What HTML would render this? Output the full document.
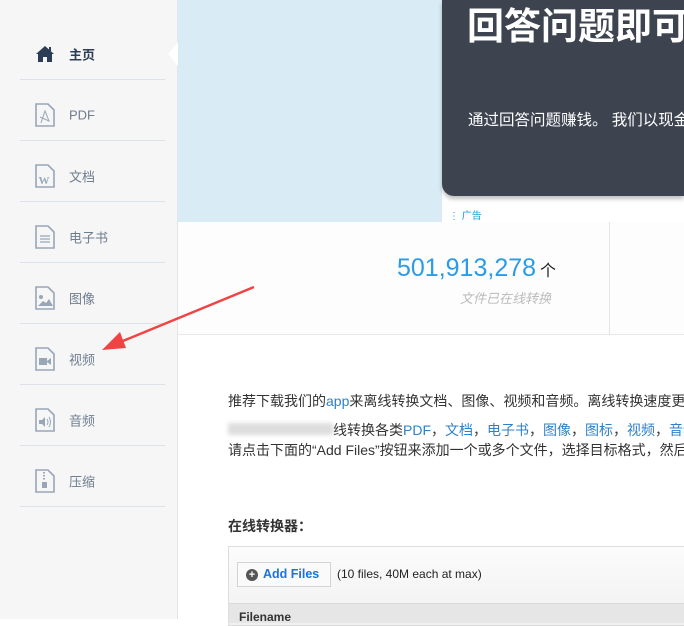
<!DOCTYPE html>
<html><head><meta charset="utf-8"><style>
*{margin:0;padding:0;box-sizing:border-box}
body{width:684px;height:619px;overflow:hidden;position:relative;background:#fff;font-family:"Liberation Sans","Noto Sans CJK SC",sans-serif}
.side{position:absolute;left:0;top:0;width:178px;height:619px;background:#f6f6f6;border-right:1px solid #e2e6ea}
.item{position:absolute;left:20px;width:145px;height:61px;border-bottom:1px solid #dde2e8;color:#6f7d90;font-size:13px}
.item span{position:absolute;left:49px;top:35px;transform:translateY(-50%)}
.item svg{position:absolute;left:15px;top:35px;transform:translateY(-50%)}
.abs{position:absolute}
a{color:#2f80c8;text-decoration:none}
</style></head><body>
<div class="side">
 <div class="item" style="top:19px"><svg width="20" height="18" viewBox="0 0 20 18"><path d="M10 1 L1 9 L3 9 L3 17 L8 17 L8 12 L12 12 L12 17 L17 17 L17 9 L19 9 Z" fill="#2c3e55"/><rect x="14" y="2" width="2" height="4" fill="#2c3e55"/></svg><span style="color:#2c3e55;font-weight:bold">主页</span></div>
 <div class="item" style="top:80px"><svg width="20" height="24" viewBox="0 0 20 24"><path d="M1 1H13L19 7V23H1Z" fill="none" stroke="#98a6b8" stroke-width="1.6"/><path d="M6 20L10 8L14 18L5 14" fill="none" stroke="#98a6b8" stroke-width="1"/></svg><span>PDF</span></div>
 <div class="item" style="top:141px"><svg width="20" height="24" viewBox="0 0 20 24"><path d="M1 1H13L19 7V23H1Z" fill="none" stroke="#98a6b8" stroke-width="1.6"/><text x="3.5" y="20" font-size="11" font-family="Liberation Serif" font-weight="bold" fill="#98a6b8">W</text></svg><span>文档</span></div>
 <div class="item" style="top:202px"><svg width="20" height="24" viewBox="0 0 20 24"><path d="M1 1H13L19 7V23H1Z" fill="none" stroke="#98a6b8" stroke-width="1.6"/><path d="M5 11H15M5 14H15M5 17H15" stroke="#98a6b8" stroke-width="1.3"/></svg><span>电子书</span></div>
 <div class="item" style="top:263px"><svg width="20" height="24" viewBox="0 0 20 24"><path d="M1 1H13L19 7V23H1Z" fill="none" stroke="#98a6b8" stroke-width="1.6"/><circle cx="6" cy="11" r="2" fill="#98a6b8"/><path d="M3 20L8 15L11 17L14 13L18 20Z" fill="#98a6b8"/></svg><span>图像</span></div>
 <div class="item" style="top:324px"><svg width="20" height="24" viewBox="0 0 20 24"><path d="M1 1H13L19 7V23H1Z" fill="none" stroke="#98a6b8" stroke-width="1.6"/><rect x="4" y="11" width="8" height="7" fill="#98a6b8"/><path d="M12 14L16 11V18L12 15Z" fill="#98a6b8"/></svg><span>视频</span></div>
 <div class="item" style="top:385px"><svg width="20" height="24" viewBox="0 0 20 24"><path d="M1 1H13L19 7V23H1Z" fill="none" stroke="#98a6b8" stroke-width="1.6"/><path d="M4 12H7L10 9V19L7 16H4Z" fill="#98a6b8"/><path d="M12 11Q14 14 12 17M14 9Q17 14 14 19" fill="none" stroke="#98a6b8"/></svg><span>音频</span></div>
 <div class="item" style="top:446px"><svg width="20" height="24" viewBox="0 0 20 24"><path d="M1 1H13L19 7V23H1Z" fill="none" stroke="#98a6b8" stroke-width="1.6"/><path d="M9 3V12" stroke="#98a6b8" stroke-width="2" stroke-dasharray="1.5 1.5"/><rect x="7" y="13" width="5" height="6" fill="#98a6b8"/></svg><span>压缩</span></div>
</div>
<div class="abs" style="left:168px;top:42px;width:0;height:0;border-top:12px solid transparent;border-bottom:12px solid transparent;border-right:10px solid #fff"></div>
<div class="abs" style="left:178px;top:0;width:264px;height:222px;background:#d9ecf6"></div>
<div class="abs" style="left:442px;top:0;width:242px;height:196px;background:#3d4450;border-bottom-left-radius:12px;box-shadow:0 3px 4px rgba(0,0,0,.25)"></div>
<div class="abs" style="left:467px;top:-4px;color:#fff;font-size:37px;font-weight:bold;white-space:nowrap">回答问题即可</div>
<div class="abs" style="left:468px;top:108px;color:#fff;font-size:15.5px;white-space:nowrap">通过回答问题赚钱。 我们以现金</div>
<div class="abs" style="left:449px;top:207px;color:#1aa3d9;font-size:10px">⋮ 广告</div>
<div class="abs" style="left:178px;top:222px;width:506px;height:113px;border-bottom:1px solid #e8e8e8;background:#fdfdfd"></div>
<div class="abs" style="left:609px;top:222px;width:1px;height:113px;background:#e4e4e4"></div>
<div class="abs" style="left:397px;top:254px;color:#2b9be8;font-size:25px;white-space:nowrap">501,913,278<span style="color:#222;font-size:16px;margin-left:4px">个</span></div>
<div class="abs" style="left:460px;top:288px;color:#bbb;font-size:13px;font-style:italic">文件已在线转换</div>
<div class="abs" style="left:228px;top:391px;color:#333;font-size:14px;white-space:nowrap;line-height:20px">推荐下载我们的<a>app</a>来离线转换文档、图像、视频和音频。离线转换速度更</div>
<div class="abs" style="left:228px;top:420px;color:#333;font-size:14px;white-space:nowrap;line-height:20px"><span style="display:inline-block;width:105px;height:12px;background:#ddd;filter:blur(2px)"></span>线转换各类<a>PDF</a>，<a>文档</a>，<a>电子书</a>，<a>图像</a>，<a>图标</a>，<a>视频</a>，<a>音频</a></div>
<div class="abs" style="left:228px;top:440px;color:#333;font-size:14px;white-space:nowrap;line-height:20px">请点击下面的“Add Files”按钮来添加一个或多个文件，选择目标格式，然后</div>
<div class="abs" style="left:228px;top:516px;color:#333;font-size:14px;font-weight:bold">在线转换器：</div>
<div class="abs" style="left:228px;top:546px;width:470px;height:80px;border:1px solid #ddd;background:linear-gradient(#fcfcfc,#f0f0f0)"></div>
<div class="abs" style="left:237px;top:562px;width:94px;height:25px;border:1px solid #d4d4d4;background:#fafafa;font-size:12.5px;font-weight:bold;color:#1a73d9;line-height:23px;padding-left:25px">Add Files</div>
<div class="abs" style="left:246px;top:569px;width:12px;height:12px;border-radius:50%;background:#555;color:#fff;font-size:11px;line-height:12px;text-align:center;font-weight:bold">+</div>
<div class="abs" style="left:337px;top:567px;font-size:12px;color:#222">(10 files, 40M each at max)</div>
<div class="abs" style="left:229px;top:603px;width:460px;height:20px;background:#e6e6e6;border-top:1px solid #d8d8d8;font-size:12px;font-weight:bold;color:#333;padding:6px 0 0 10px">Filename</div>
<svg class="abs" style="left:0;top:0" width="684" height="619"><path d="M254 287L118 343" stroke="#f04444" stroke-width="2.5"/><path d="M102 350L120 332L126 348Z" fill="#f04444"/></svg>
</body></html>
